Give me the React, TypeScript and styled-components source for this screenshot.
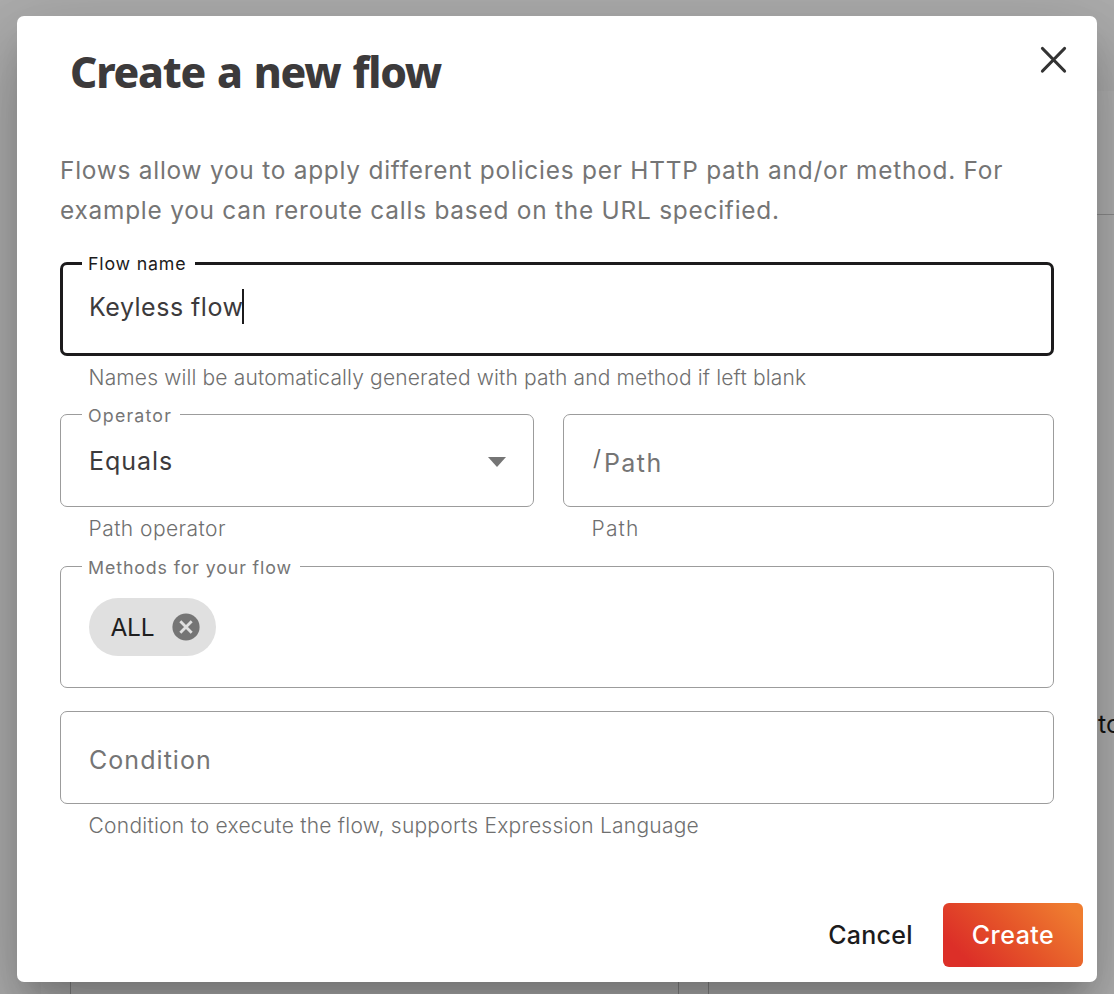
import React from 'react';
import styled, { createGlobalStyle } from 'styled-components';

const GlobalStyle = createGlobalStyle`
  * { box-sizing: border-box; }
  body {
    margin: 0;
    overflow: hidden;
    font-family: Inter, "Liberation Sans", sans-serif;
    color: #3c3a3c;
  }
  button { font-family: inherit; border: 0; padding: 0; background: none; }
`;

const Screen = styled.div`
  position: relative;
  width: 1114px;
  height: 994px;
  overflow: hidden;
  display: grid;
  grid-template-columns: 41px minmax(0, 1fr);
  background: #adadad;
`;

const Page = styled.div`
  grid-column: 2;
  display: flex;
  flex-direction: column;
  padding-top: 91px;
`;

const PageHeader = styled.div`
  height: 124px;
  background: #b1b1b1;
  border-bottom: 1px solid #8c8c8c;
`;

const PageBody = styled.div`
  flex: 1;
  display: flex;
  flex-direction: column;
  background: #b1b1b1;
`;

const PageText = styled.div`
  height: 752px;
  padding: 489px 0 0 1057px;
  overflow: hidden;
  font-size: 25px;
  line-height: 40px;
  color: #141414;
  white-space: nowrap;
`;

const PanelRow = styled.div`
  flex: 1;
  display: flex;
  gap: 29px;
  padding-left: 29px;
  overflow: hidden;
`;

const Panel = styled.div<{ $width: number }>`
  flex: none;
  width: ${(p) => p.$width}px;
  border: solid #868686;
  border-width: 0 1px;
`;

const Dialog = styled.section`
  position: absolute;
  top: 16px;
  left: 17px;
  width: 1080px;
  height: 966px;
  display: flex;
  flex-direction: column;
  border-radius: 7px;
  background: #fff;
  box-shadow:
    0 20px 27px -13px rgba(0, 0, 0, 0.2),
    0 43px 68px 5px rgba(0, 0, 0, 0.14),
    0 16px 82px 14px rgba(0, 0, 0, 0.12);
`;

const DialogHeader = styled.header`
  display: flex;
  justify-content: space-between;
  align-items: flex-start;
  padding: 28px 28px 0 53px;
`;

const Title = styled.h2`
  margin: 0;
  font: 800 42.5px/56px "Noto Sans", "Open Sans", sans-serif;
  letter-spacing: -1.25px;
  word-spacing: 2.3px;
  color: #3c3a3b;
`;

const CloseButton = styled.button`
  display: flex;
`;

const Content = styled.div`
  padding: 50px 43px 0;
`;

const Intro = styled.p`
  margin: 0 0 32px;
  font-size: 24.4px;
  line-height: 40px;
  letter-spacing: 0.77px;
  color: #757575;
`;

const Field = styled.div<{ $gap?: number }>`
  flex: 1;
  min-width: 0;
  margin-bottom: ${(p) => p.$gap ?? 0}px;
`;

const FieldRow = styled.div`
  display: flex;
  gap: 29px;
`;

const OperatorColumn = styled.div`
  display: flex;
  width: 474px;
  flex: none;
`;

const Outline = styled.div<{ $height: number; $top: number; $focused?: boolean }>`
  position: relative;
  display: flex;
  align-items: flex-start;
  height: ${(p) => p.$height}px;
  border: ${(p) => (p.$focused ? '3px solid #1c1b1c' : '1px solid #9c9c9c')};
  border-radius: 7px;
  padding: ${(p) => p.$top - (p.$focused ? 3 : 1)}px ${(p) => (p.$focused ? 25 : 27)}px 0
    ${(p) => (p.$focused ? 26 : 28)}px;
`;

const Label = styled.label<{ $left: number; $top: number; $width: number; $spacing: number; $dark?: boolean }>`
  position: absolute;
  top: ${(p) => p.$top}px;
  left: ${(p) => p.$left}px;
  width: ${(p) => p.$width}px;
  padding-left: 6px;
  background: #fff;
  font-size: 17.8px;
  line-height: 24px;
  letter-spacing: ${(p) => p.$spacing}px;
  white-space: nowrap;
  color: ${(p) => (p.$dark ? '#1c1b1c' : '#757575')};
`;

const Value = styled.span<{ $spacing: number; $muted?: boolean }>`
  font-size: 25px;
  line-height: 40px;
  letter-spacing: ${(p) => p.$spacing}px;
  white-space: nowrap;
  color: ${(p) => (p.$muted ? '#757575' : '#3c3a3c')};
`;

const Caret = styled.span`
  width: 2px;
  height: 35px;
  margin: 2px 0 0 -1px;
  background: #1c1b1c;
`;

const Prefix = styled.span`
  width: 12px;
  margin-top: -5px;
  padding-left: 1px;
  font-size: 22px;
  line-height: 40px;
  color: #666;
`;

const Arrow = styled.svg`
  margin: 16px 0 0 auto;
`;

const Hint = styled.div<{ $spacing: number }>`
  height: 36px;
  padding: 7px 0 0 28.6px;
  font-size: 21px;
  font-weight: 300;
  line-height: 30px;
  letter-spacing: ${(p) => p.$spacing}px;
  white-space: nowrap;
  color: #6f6f6f;
`;

const Chip = styled.span`
  display: flex;
  align-items: center;
  width: 127px;
  height: 58px;
  padding: 0 16.5px 0 21.5px;
  justify-content: space-between;
  border-radius: 29px;
  background: #e0e0e0;
  font-size: 24.5px;
  line-height: 40px;
  letter-spacing: -0.3px;
  color: #1f1f1f;
`;

const Actions = styled.footer`
  display: flex;
  justify-content: flex-end;
  margin-top: auto;
  padding: 0 14px 15px 0;
`;

const ActionButton = styled.button<{ $primary?: boolean }>`
  width: ${(p) => (p.$primary ? 140 : 145)}px;
  height: 64px;
  border-radius: 6px;
  font-size: 25px;
  font-weight: 500;
  letter-spacing: ${(p) => (p.$primary ? 0.5 : 0.25)}px;
  color: ${(p) => (p.$primary ? '#fff' : '#1c1b1c')};
  background: ${(p) => (p.$primary ? 'linear-gradient(45deg, #dc2f28 15%, #e55429 52%, #ef7d30 92%)' : 'none')};
`;

export default function App() {
  return (
    <>
      <GlobalStyle />
      <Screen>
        <Page>
          <PageHeader />
          <PageBody>
            <PageText>to</PageText>
            <PanelRow>
              <Panel $width={609} />
              <Panel $width={609} />
            </PanelRow>
          </PageBody>
        </Page>
        <Dialog>
          <DialogHeader>
            <Title>Create a new flow</Title>
            <CloseButton aria-label="Close">
              <svg width="32" height="32" viewBox="0 0 32 32" fill="none" stroke="#333" strokeWidth="3.2" strokeLinecap="round">
                <path d="M5.5 4.5 27.5 27M27.5 4.5 5.5 27" />
              </svg>
            </CloseButton>
          </DialogHeader>
          <Content>
            <Intro>
              Flows allow you to apply different policies per HTTP path and/or method. For example you can reroute calls
              based on the URL specified.
            </Intro>
            <Field $gap={22}>
              <Outline $height={94} $top={25} $focused>
                <Label $left={19} $top={-13} $width={113} $spacing={0.8} $dark>Flow name</Label>
                <Value $spacing={0.5}>Keyless flow</Value>
                <Caret />
              </Outline>
              <Hint $spacing={0.14}>Names will be automatically generated with path and method if left blank</Hint>
            </Field>
            <FieldRow>
              <OperatorColumn>
                <Field $gap={23}>
                  <Outline $height={93} $top={27}>
                    <Label $left={21} $top={-11} $width={98} $spacing={1.2}>Operator</Label>
                    <Value $spacing={0.95}>Equals</Value>
                    <Arrow width="18" height="10" viewBox="0 0 18 10"><path d="M0 0h18L9 10z" fill="#757575" /></Arrow>
                  </Outline>
                  <Hint $spacing={0.43}>Path operator</Hint>
                </Field>
              </OperatorColumn>
              <Field $gap={23}>
                <Outline $height={93} $top={29}>
                  <Prefix>/</Prefix>
                  <Value $spacing={1.4} $muted>Path</Value>
                </Outline>
                <Hint $spacing={1.1}>Path</Hint>
              </Field>
            </FieldRow>
            <Field $gap={23}>
              <Outline $height={122} $top={32}>
                <Label $left={21} $top={-11} $width={218} $spacing={0.88}>Methods for your flow</Label>
                <Chip>
                  ALL
                  <svg width="28" height="28" viewBox="0 0 28 28">
                    <circle cx="14" cy="14" r="13.6" fill="#757575" />
                    <path d="m8.3 8.3 11.4 11.4m0-11.4L8.3 19.7" stroke="#e0e0e0" strokeWidth="2.8" />
                  </svg>
                </Chip>
              </Outline>
            </Field>
            <Field>
              <Outline $height={93} $top={29}>
                <Value $spacing={1.05} $muted>Condition</Value>
              </Outline>
              <Hint $spacing={0.23}>Condition to execute the flow, supports Expression Language</Hint>
            </Field>
          </Content>
          <Actions>
            <ActionButton>Cancel</ActionButton>
            <ActionButton $primary>Create</ActionButton>
          </Actions>
        </Dialog>
      </Screen>
    </>
  );
}
